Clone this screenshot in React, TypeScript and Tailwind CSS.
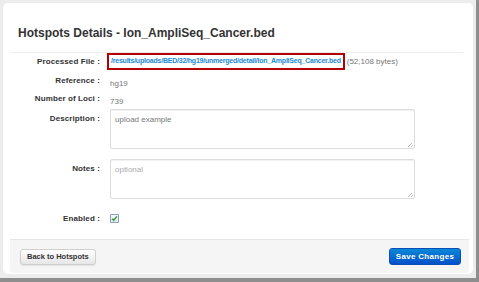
const font = { fontFamily: '"Liberation Sans", Arial, Helvetica, sans-serif' };

function Row({ label, children, className = '', labelClass = '' }: { label: string; children: React.ReactNode; className?: string; labelClass?: string }) {
  return (
    <div className={`flex ${className}`}>
      <div className={`w-[107px] shrink-0 pr-[10px] text-right text-[8px] font-bold tracking-[0.1px] text-[#333] ${labelClass}`}>{label}</div>
      <div className="flex-1">{children}</div>
    </div>
  );
}

function Grip() {
  return (
    <span className="absolute bottom-[2px] right-[2px] h-[5px] w-[5px] bg-[linear-gradient(135deg,transparent_50%,#bbb_50%,#bbb_60%,transparent_60%,transparent_75%,#bbb_75%,#bbb_85%,transparent_85%)]" />
  );
}

export default function App() {
  return (
    <div className="h-[282px] w-[479px] border-b-[4px] border-r-[3px] border-[#8e8e8e] bg-[#ececec] pl-[3px] pt-[3px]" style={font}>
      <div className="flex h-[271px] w-[470px] flex-col rounded-[5px] bg-white">
        <div className="ml-[7px] mr-[10px] flex h-[50px] items-end border-b border-[#eeeeee] pb-[13px] pl-[8px]">
          <h1 className="text-[12px] font-bold leading-none text-[#333]">Hotspots Details - Ion_AmpliSeq_Cancer.bed</h1>
        </div>

        <div className="flex flex-col">
          <Row label="Processed File :" className="h-[17px] items-center">
            <div className="-ml-[3px] flex items-center">
              <span className="flex h-[17px] w-fit items-center border-2 border-[#b40000] px-[2px] text-[7px] font-bold tracking-[-0.22px] whitespace-nowrap text-[#1b8ad3]">
                /results/uploads/BED/32/hg19/unmerged/detail/Ion_AmpliSeq_Cancer.bed
              </span>
              <span className="ml-[2px] text-[8px] text-[#777]">(52,108 bytes)</span>
            </div>
          </Row>
          <Row label="Reference :" className="mt-[2px] h-[17px] items-center">
            <span className="text-[8px] text-[#777]">hg19</span>
          </Row>
          <Row label="Number of Loci :" className="mt-[1px] h-[17px] items-center">
            <span className="text-[8px] text-[#777]">739</span>
          </Row>
          <Row label="Description :" className="mt-[2px] items-start" labelClass="pt-[4px]">
            <div className="relative w-fit">
              <div className="h-[40px] w-[305px] rounded-[2px] border border-[#dcdcdc] px-[4px] pt-[4px] text-[8px] text-[#777] shadow-[inset_0_1px_1px_rgba(0,0,0,0.06)]">
                upload example
              </div>
              <Grip />
            </div>
          </Row>
          <Row label="Notes :" className="mt-[10px] items-start" labelClass="pt-[4px]">
            <div className="relative w-fit">
              <div className="h-[40px] w-[305px] rounded-[2px] border border-[#dcdcdc] px-[4px] pt-[4px] text-[8px] text-[#aaa] shadow-[inset_0_1px_1px_rgba(0,0,0,0.06)]">
                optional
              </div>
              <Grip />
            </div>
          </Row>
          <Row label="Enabled :" className="mt-[11px] h-[17px] items-center">
            <span className="flex h-[9px] w-[9px] items-center justify-center rounded-[1px] border border-[#8aa0b8] bg-[linear-gradient(#f4f8fc,#dfe8f2)]">
              <svg viewBox="0 0 8 8" className="h-[7px] w-[7px]">
                <path d="M1.2 4.2 L3.1 6 L6.8 1.6" fill="none" stroke="#2a9a2a" strokeWidth="1.6" />
              </svg>
            </span>
          </Row>
        </div>

        <div className="mt-auto mb-[1px] ml-[7px] mr-[4px] flex h-[34px] items-center justify-between rounded-b-[4px] border-t border-[#e6e6e6] bg-[#f5f5f5] pl-[10px] pr-[8px]">
          <button className="h-[16px] rounded-[3px] border border-[#cfcfcf] bg-[linear-gradient(#ffffff,#e6e6e6)] px-[6px] text-[7.5px] font-bold text-[#333] shadow-[0_1px_1px_rgba(0,0,0,0.08)]">
            Back to Hotspots
          </button>
          <button className="h-[17px] w-[72px] rounded-[3px] border border-[#0a4fb8] bg-[linear-gradient(#0a88d8,#0450c8)] text-[8px] font-bold tracking-[0.3px] text-white">
            Save Changes
          </button>
        </div>
      </div>
    </div>
  );
}
